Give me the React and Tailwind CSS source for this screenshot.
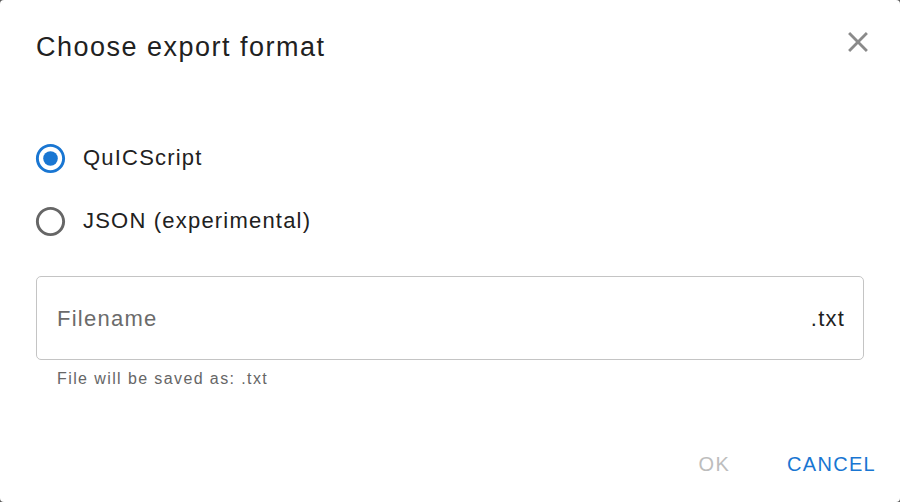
import React, { useState } from "react";

function RadioIcon({ checked }) {
  return (
    <svg viewBox="0 0 24 24" className="w-[35px] h-[35px] shrink-0">
      <path
        fill={checked ? "#1976d2" : "#666666"}
        d="M12 2C6.48 2 2 6.48 2 12s4.48 10 10 10 10-4.48 10-10S17.52 2 12 2zm0 18c-4.42 0-8-3.58-8-8s3.58-8 8-8 8 3.58 8 8-3.58 8-8 8z"
      />
      {checked && <circle cx="12" cy="12" r="5" fill="#1976d2" />}
    </svg>
  );
}

export default function App() {
  const [format, setFormat] = useState("quic");
  const options = [
    { id: "quic", label: "QuICScript" },
    { id: "json", label: "JSON (experimental)" },
  ];

  return (
    <div
      className="w-[900px] h-[502px] bg-[#5a5a5a]"
      style={{ fontFamily: '"Liberation Sans", Arial, sans-serif' }}
    >
      <div className="w-full h-full bg-white rounded-[4px] flex flex-col">
        <div className="flex justify-between items-start pl-[36px] pr-[25px]">
          <h2 className="mt-[29px] h-[36px] leading-[36px] text-[27px] tracking-[1.5px] text-[#212121]">
            Choose export format
          </h2>
          <button className="mt-[25px]">
            <svg viewBox="0 0 24 24" className="w-[34px] h-[34px]">
              <path
                fill="#8a8a8a"
                d="M19 6.41 17.59 5 12 10.59 6.41 5 5 6.41 10.59 12 5 17.59 6.41 19 12 13.41 17.59 19 19 17.59 13.41 12z"
              />
            </svg>
          </button>
        </div>

        <div className="flex flex-col gap-[19px] mt-[71px] pl-[33px]">
          {options.map((o) => (
            <label
              key={o.id}
              className="flex items-center h-[44px] gap-[15px] cursor-pointer"
              onClick={() => setFormat(o.id)}
            >
              <RadioIcon checked={format === o.id} />
              <span className="text-[22px] leading-[44px] tracking-[1.2px] text-[#212121]">{o.label}</span>
            </label>
          ))}
        </div>

        <div className="mx-[36px] mt-[33px] h-[84px] border border-[#c4c4c4] rounded-[5px] flex items-center justify-between pl-[20px] pr-[18px]">
          <span className="text-[22px] tracking-[1.25px] text-[#6b6b6b]">Filename</span>
          <span className="text-[22px] tracking-[1.2px] text-[#212121]">.txt</span>
        </div>
        <p className="ml-[57px] mt-[9px] text-[16px] leading-[20px] tracking-[1.4px] text-[#666666]">
          File will be saved as: .txt
        </p>

        <div className="flex-1" />

        <div className="flex justify-end items-center gap-[35px] pr-[13px] pb-[18px]">
          <button className="h-[40px] px-[11px] text-[20px] tracking-[1.3px] text-[#bdbdbd]" disabled>
            OK
          </button>
          <button className="h-[40px] px-[11px] text-[20px] tracking-[1.3px] text-[#1976d2]">
            CANCEL
          </button>
        </div>
      </div>
    </div>
  );
}
